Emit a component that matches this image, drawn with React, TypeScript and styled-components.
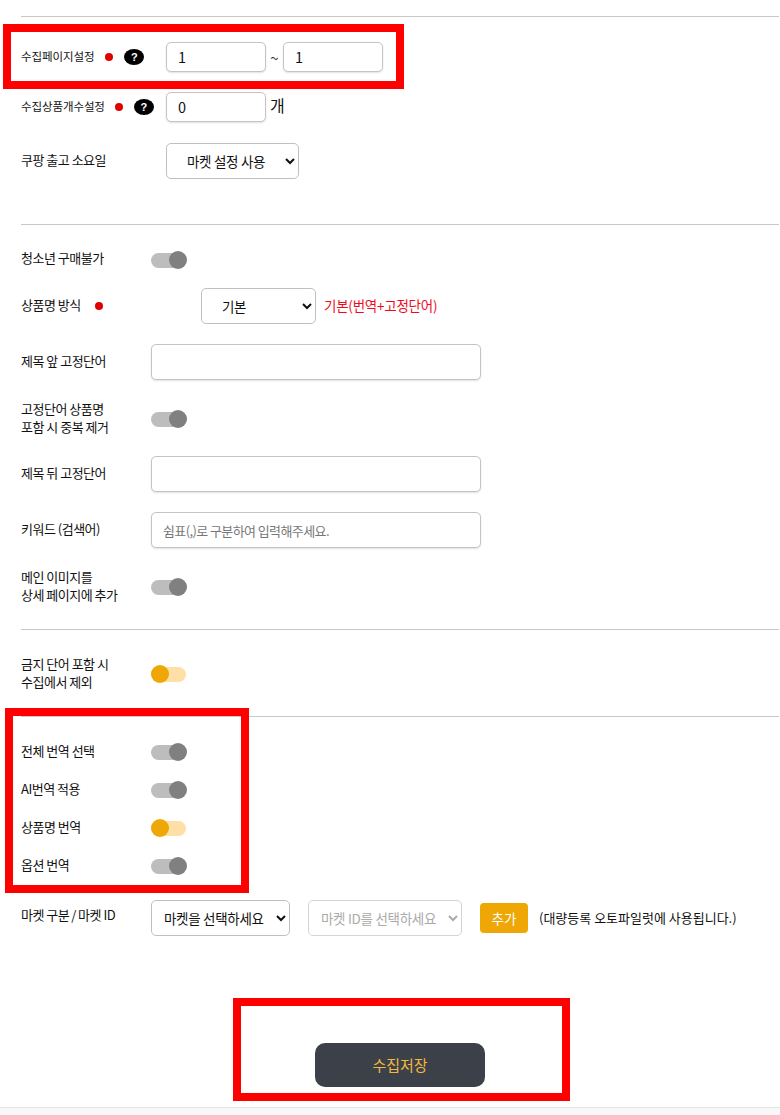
import React from "react";
import styled, { createGlobalStyle } from "styled-components";

const Global = createGlobalStyle`
  html, body { margin: 0; padding: 0; background: #fff; }
  body { font-family: "Noto Sans CJK KR", "Noto Sans", sans-serif; color: #111; }
  * { box-sizing: border-box; }
`;

const Page = styled.div`
  position: relative;
  width: 780px;
  height: 1115px;
  overflow: hidden;
  padding-top: 16px;
  display: flex;
  flex-direction: column;
`;

const Divider = styled.div<{ $after: number }>`
  height: 1px;
  margin: 0 1px ${(p) => p.$after}px 21px;
  background: #c8c8c8;
  flex: none;
`;

const Row = styled.div<{ $h: number; $after?: number }>`
  display: flex;
  align-items: center;
  height: ${(p) => p.$h}px;
  margin-bottom: ${(p) => p.$after ?? 0}px;
  padding-left: 21px;
  flex: none;
`;

const Label = styled.div<{ $w?: number; $size?: number; $lift?: number }>`
  width: ${(p) => p.$w ?? 130}px;
  flex: none;
  display: flex;
  align-items: center;
  padding-bottom: ${(p) => p.$lift ?? 3}px;
  font-size: ${(p) => p.$size ?? 13}px;
  line-height: 18px;
  letter-spacing: ${(p) => ((p.$size ?? 13) < 12 ? "-0.1px" : "-0.5px")};
  white-space: pre-line;
`;

const Dot = styled.span<{ $left: number }>`
  width: 8px;
  height: 8px;
  border-radius: 50%;
  background: #e00000;
  margin: 2px 0 0 ${(p) => p.$left}px;
  flex: none;
`;

const Help = styled.span<{ $left: number }>`
  width: 20px;
  height: 16px;
  border-radius: 50%;
  background: #000;
  color: #fff;
  margin: 2px 0 0 ${(p) => p.$left}px;
  font: bold 11px/16px "Liberation Sans", sans-serif;
  text-align: center;
  flex: none;
`;

const Field = styled.input<{ $w: number; $h: number }>`
  width: ${(p) => p.$w}px;
  height: ${(p) => p.$h}px;
  border: 1px solid #c4c4c4;
  border-radius: 5px;
  padding: 0 11px 2px;
  font-family: "Noto Sans CJK KR", "Noto Sans", sans-serif;
  font-size: 14.5px;
  color: #111;
  background: #fff;
  outline: none;
  box-shadow: 0 1px 2px rgba(0, 0, 0, 0.12);
  flex: none;
  &::placeholder { color: #777; opacity: 1; font-size: 13px; letter-spacing: -0.6px; }
`;

const Select = styled.select<{ $w: number; $muted?: boolean; $left?: number; $pad?: number }>`
  width: ${(p) => p.$w}px;
  height: 36px;
  margin-left: ${(p) => p.$left ?? 0}px;
  border: 1px solid ${(p) => (p.$muted ? "#d4d4d4" : "#c0c0c0")};
  border-radius: 5px;
  padding: 0 0 1px ${(p) => p.$pad ?? 16}px;
  font-family: "Noto Sans CJK KR", "Noto Sans", sans-serif;
  font-size: 13.5px;
  letter-spacing: -0.3px;
  color: ${(p) => (p.$muted ? "#aaa" : "#111")};
  background-color: #fff;
  flex: none;
  outline: none;
`;

const Tilde = styled.span`
  width: 17px;
  text-align: center;
  font-size: 15px;
  color: #333;
  flex: none;
`;

const Unit = styled.span`
  margin-left: 4px;
  font-size: 16px;
  margin-top: -4px;
`;

const RedNote = styled.span`
  margin-left: 8px;
  padding-bottom: 2px;
  font-size: 13.5px;
  letter-spacing: -0.25px;
  color: #f00a1e;
`;

const Track = styled.span<{ $on: boolean }>`
  position: relative;
  display: block;
  width: 35px;
  height: 15px;
  border-radius: 8px;
  flex: none;
  background: ${(p) => (p.$on ? "#ffdfa8" : "#bdbdbd")};
`;

const Knob = styled.span<{ $on: boolean }>`
  position: absolute;
  top: -1.5px;
  left: ${(p) => (p.$on ? "0" : "18px")};
  width: 18px;
  height: 18px;
  border-radius: 50%;
  background: ${(p) => (p.$on ? "#eea704" : "#808080")};
`;

const Toggle = ({ on = false }: { on?: boolean }) => (
  <Track $on={on}>
    <Knob $on={on} />
  </Track>
);

const AddButton = styled.button`
  width: 48px;
  height: 30px;
  margin: 0 0 0 18px;
  border: 0;
  border-radius: 4px;
  background: #eea704;
  color: #fff;
  font-family: "Noto Sans CJK KR", "Noto Sans", sans-serif;
  font-size: 13.5px;
  padding: 0;
  flex: none;
`;

const Hint = styled.span`
  margin-left: 11px;
  padding-bottom: 2px;
  font-size: 13px;
  letter-spacing: 0;
  white-space: nowrap;
`;

const SaveRow = styled.div`
  display: flex;
  justify-content: center;
  padding-left: 20px;
  margin-bottom: 20px;
  flex: none;
`;

const SaveButton = styled.button`
  width: 170px;
  height: 44px;
  border: 0;
  border-radius: 10px;
  background: #3c4048;
  color: #f2b93f;
  font-family: "Noto Sans CJK KR", "Noto Sans", sans-serif;
  font-size: 15px;
  padding: 0 0 2px;
`;

const Footer = styled.div`
  flex: 1;
  border-top: 1px solid #e4e4e4;
  background: #f8f8f8;
`;

const Mark = styled.div<{ $x: number; $y: number; $w: number; $h: number }>`
  position: absolute;
  left: ${(p) => p.$x}px;
  top: ${(p) => p.$y}px;
  width: ${(p) => p.$w}px;
  height: ${(p) => p.$h}px;
  border: 8px solid #ff0000;
  pointer-events: none;
`;

export default function App() {
  return (
    <Page>
      <Global />
      <Divider $after={25} />
      <Row $h={30} $after={20}>
        <Label $w={145} $size={11.5}>
          수집페이지설정
          <Dot $left={11} />
          <Help $left={11}>?</Help>
        </Label>
        <Field $w={100} $h={30} defaultValue="1" />
        <Tilde>~</Tilde>
        <Field $w={100} $h={30} defaultValue="1" />
      </Row>
      <Row $h={30} $after={21}>
        <Label $w={145} $size={11.5}>
          수집상품개수설정
          <Dot $left={10} />
          <Help $left={11}>?</Help>
        </Label>
        <Field $w={100} $h={30} defaultValue="0" />
        <Unit>개</Unit>
      </Row>
      <Row $h={36} $after={45}>
        <Label $w={145}>쿠팡 출고 소요일</Label>
        <Select $w={133}>
          <option>마켓 설정 사용</option>
        </Select>
      </Row>

      <Divider $after={17} />
      <Row $h={36} $after={10}>
        <Label $lift={4}>청소년 구매불가</Label>
        <Toggle />
      </Row>
      <Row $h={36} $after={20}>
        <Label $w={180}>
          상품명 방식
          <Dot $left={14} />
        </Label>
        <Select $w={115}>
          <option>기본</option>
        </Select>
        <RedNote>기본(번역+고정단어)</RedNote>
      </Row>
      <Row $h={36} $after={21}>
        <Label>제목 앞 고정단어</Label>
        <Field $w={330} $h={36} />
      </Row>
      <Row $h={36} $after={19}>
        <Label>{"고정단어 상품명\n포함 시 중복 제거"}</Label>
        <Toggle />
      </Row>
      <Row $h={36} $after={20}>
        <Label>제목 뒤 고정단어</Label>
        <Field $w={330} $h={36} />
      </Row>
      <Row $h={36} $after={21}>
        <Label>키워드 (검색어)</Label>
        <Field $w={330} $h={36} placeholder="쉼표(,)로 구분하여 입력해주세요." />
      </Row>
      <Row $h={36} $after={24}>
        <Label>{"메인 이미지를\n상세 페이지에 추가"}</Label>
        <Toggle />
      </Row>

      <Divider $after={26} />
      <Row $h={36} $after={24}>
        <Label>{"금지 단어 포함 시\n수집에서 제외"}</Label>
        <Toggle on />
      </Row>

      <Divider $after={16} />
      <Row $h={38}>
        <Label>전체 번역 선택</Label>
        <Toggle />
      </Row>
      <Row $h={38}>
        <Label>AI번역 적용</Label>
        <Toggle />
      </Row>
      <Row $h={38}>
        <Label>상품명 번역</Label>
        <Toggle on />
      </Row>
      <Row $h={38} $after={15}>
        <Label>옵션 번역</Label>
        <Toggle />
      </Row>
      <Row $h={36} $after={107}>
        <Label $lift={7}>{"마켓 구분\u2009/\u2009마켓 ID"}</Label>
        <Select $w={139} $pad={8}>
          <option>마켓을 선택하세요</option>
        </Select>
        <Select $w={154} $muted $left={18} $pad={8}>
          <option>마켓 ID를 선택하세요</option>
        </Select>
        <AddButton>추가</AddButton>
        <Hint>(대량등록 오토파일럿에 사용됩니다.)</Hint>
      </Row>

      <SaveRow>
        <SaveButton>수집저장</SaveButton>
      </SaveRow>
      <Footer />

      <Mark $x={3} $y={24} $w={401} $h={65} />
      <Mark $x={5} $y={708} $w={244} $h={185} />
      <Mark $x={233} $y={998} $w={337} $h={103} />
    </Page>
  );
}
